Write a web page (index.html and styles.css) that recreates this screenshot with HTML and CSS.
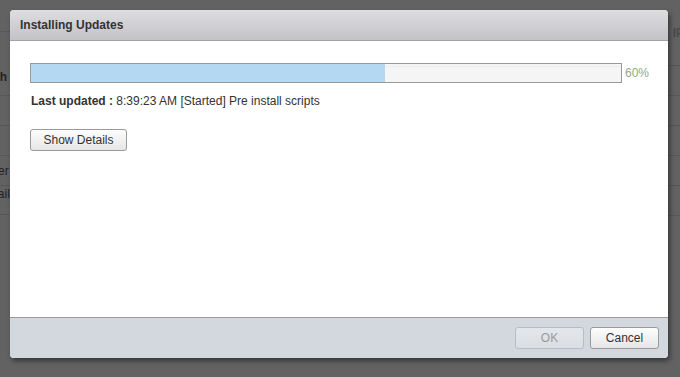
FILE: index.html
```html
<!DOCTYPE html>
<html>
<head>
<meta charset="utf-8">
<link rel="stylesheet" href="styles.css">
</head>
<body>
<div class="page">
  <div class="col col-left">
    <div class="row r-top"></div>
    <div class="row r-head"><span class="cell-l">Path</span></div>
    <div class="row"></div>
    <div class="row"></div>
    <div class="row"><span class="cell-l">Ever</span></div>
    <div class="row r-low"><span class="cell-l">Avail<b class="red">a</b></span></div>
  </div>
  <div class="col col-right">
    <div class="row r-rhead"><span class="cell-r">IP</span></div>
    <div class="row"></div>
    <div class="row"></div>
    <div class="row"></div>
    <div class="row"></div>
    <div class="row"></div>
  </div>
</div>

<div class="dialog">
  <div class="header">Installing Updates</div>
  <div class="content">
    <div class="progress-line">
      <div class="bar"><div class="fill" style="width:60%"></div></div>
      <span class="pct">60%</span>
    </div>
    <div class="status"><b>Last updated :</b> 8:39:23 AM [Started] Pre install scripts</div>
    <button class="btn details">Show Details</button>
  </div>
  <div class="footer">
    <button class="btn ok" disabled>OK</button>
    <button class="btn cancel">Cancel</button>
  </div>
</div>
</body>
</html>
```
FILE: styles.css
```css
html, body {
  margin: 0;
  padding: 0;
  background: #626262;
  font-family: "Liberation Sans", Arial, sans-serif;
  font-size: 12px;
  width: 680px;
  height: 377px;
  overflow: hidden;
}
.page {
  display: flex;
}
.col {
  display: flex;
  flex-direction: column;
}
.col-left { width: 340px; }
.col-right { flex: 1; align-items: stretch; }
.row {
  height: 29px;
  border-bottom: 1px solid #575757;
  display: flex;
  align-items: center;
  justify-content: space-between;
  color: #222;
  font-size: 12px;
}
.r-top { height: 31px; }
.r-head { height: 64px; align-items: flex-end; padding-bottom: 11px; box-sizing: border-box; font-weight: bold; }
.r-low { align-items: flex-start; padding-top: 1px; box-sizing: border-box; }
.r-rhead { height: 66px; justify-content: flex-end; align-items: flex-start; padding-top: 26px; box-sizing: border-box; }
.cell-l { margin-left: -16px; }
.r-head .cell-l { margin-left: -19px; }
.cell-r { margin-right: -4px; font-weight: bold; color: #4a4a4a; }
.red { color: #7a2a2a; font-weight: normal; }

.dialog {
  position: absolute;
  left: 10px;
  top: 10px;
  width: 658px;
  height: 348px;
  display: flex;
  flex-direction: column;
  background: #fff;
  border-radius: 4px;
  box-shadow: 2px 3px 5px rgba(0,0,0,0.45);
  overflow: hidden;
}
.header {
  height: 30px;
  flex: none;
  background: linear-gradient(#dedee1, #c3c3c7);
  border-bottom: 1px solid #a3a3a3;
  color: #333;
  font-weight: bold;
  font-size: 12px;
  line-height: 30px;
  padding-left: 10px;
}
.content {
  flex: 1;
  padding: 22px 0 0 20px;
}
.progress-line {
  display: flex;
  align-items: center;
  gap: 3px;
}
.bar {
  width: 590px;
  height: 18px;
  border: 1px solid #999;
  background: #f5f5f5;
  position: relative;
}
.bar::before {
  content: "";
  position: absolute;
  left: 0; right: 0; top: 2px;
  border-top: 1px dotted #e2e2e2;
}
.fill {
  position: relative;
  height: 100%;
  background: #b4d8f1;
}
.pct {
  color: #92a88c;
  font-size: 12px;
}
.status {
  margin-top: 11px;
  margin-left: 1px;
  color: #333;
  font-size: 12px;
}
.btn {
  font-family: "Liberation Sans", Arial, sans-serif;
  font-size: 12px;
  color: #333;
  height: 22px;
  border: 1px solid #9a9a9a;
  border-radius: 3px;
  background: linear-gradient(#fdfdfd, #e6e6e6);
  padding: 0;
}
.details {
  margin-top: 21px;
  width: 97px;
}
.footer {
  flex: none;
  background: #d3d8df;
  border-top: 1px solid #9b9b9b;
  display: flex;
  justify-content: flex-end;
  align-items: flex-start;
  gap: 6px;
  padding: 9px 9px 0 0;
  box-sizing: border-box;
  height: 41px;
}
.ok, .cancel { width: 69px; }
.ok {
  color: #9a9a9a;
  border-color: #b9bcc0;
  background: linear-gradient(#e3e6ea, #dadde2);
}
```
